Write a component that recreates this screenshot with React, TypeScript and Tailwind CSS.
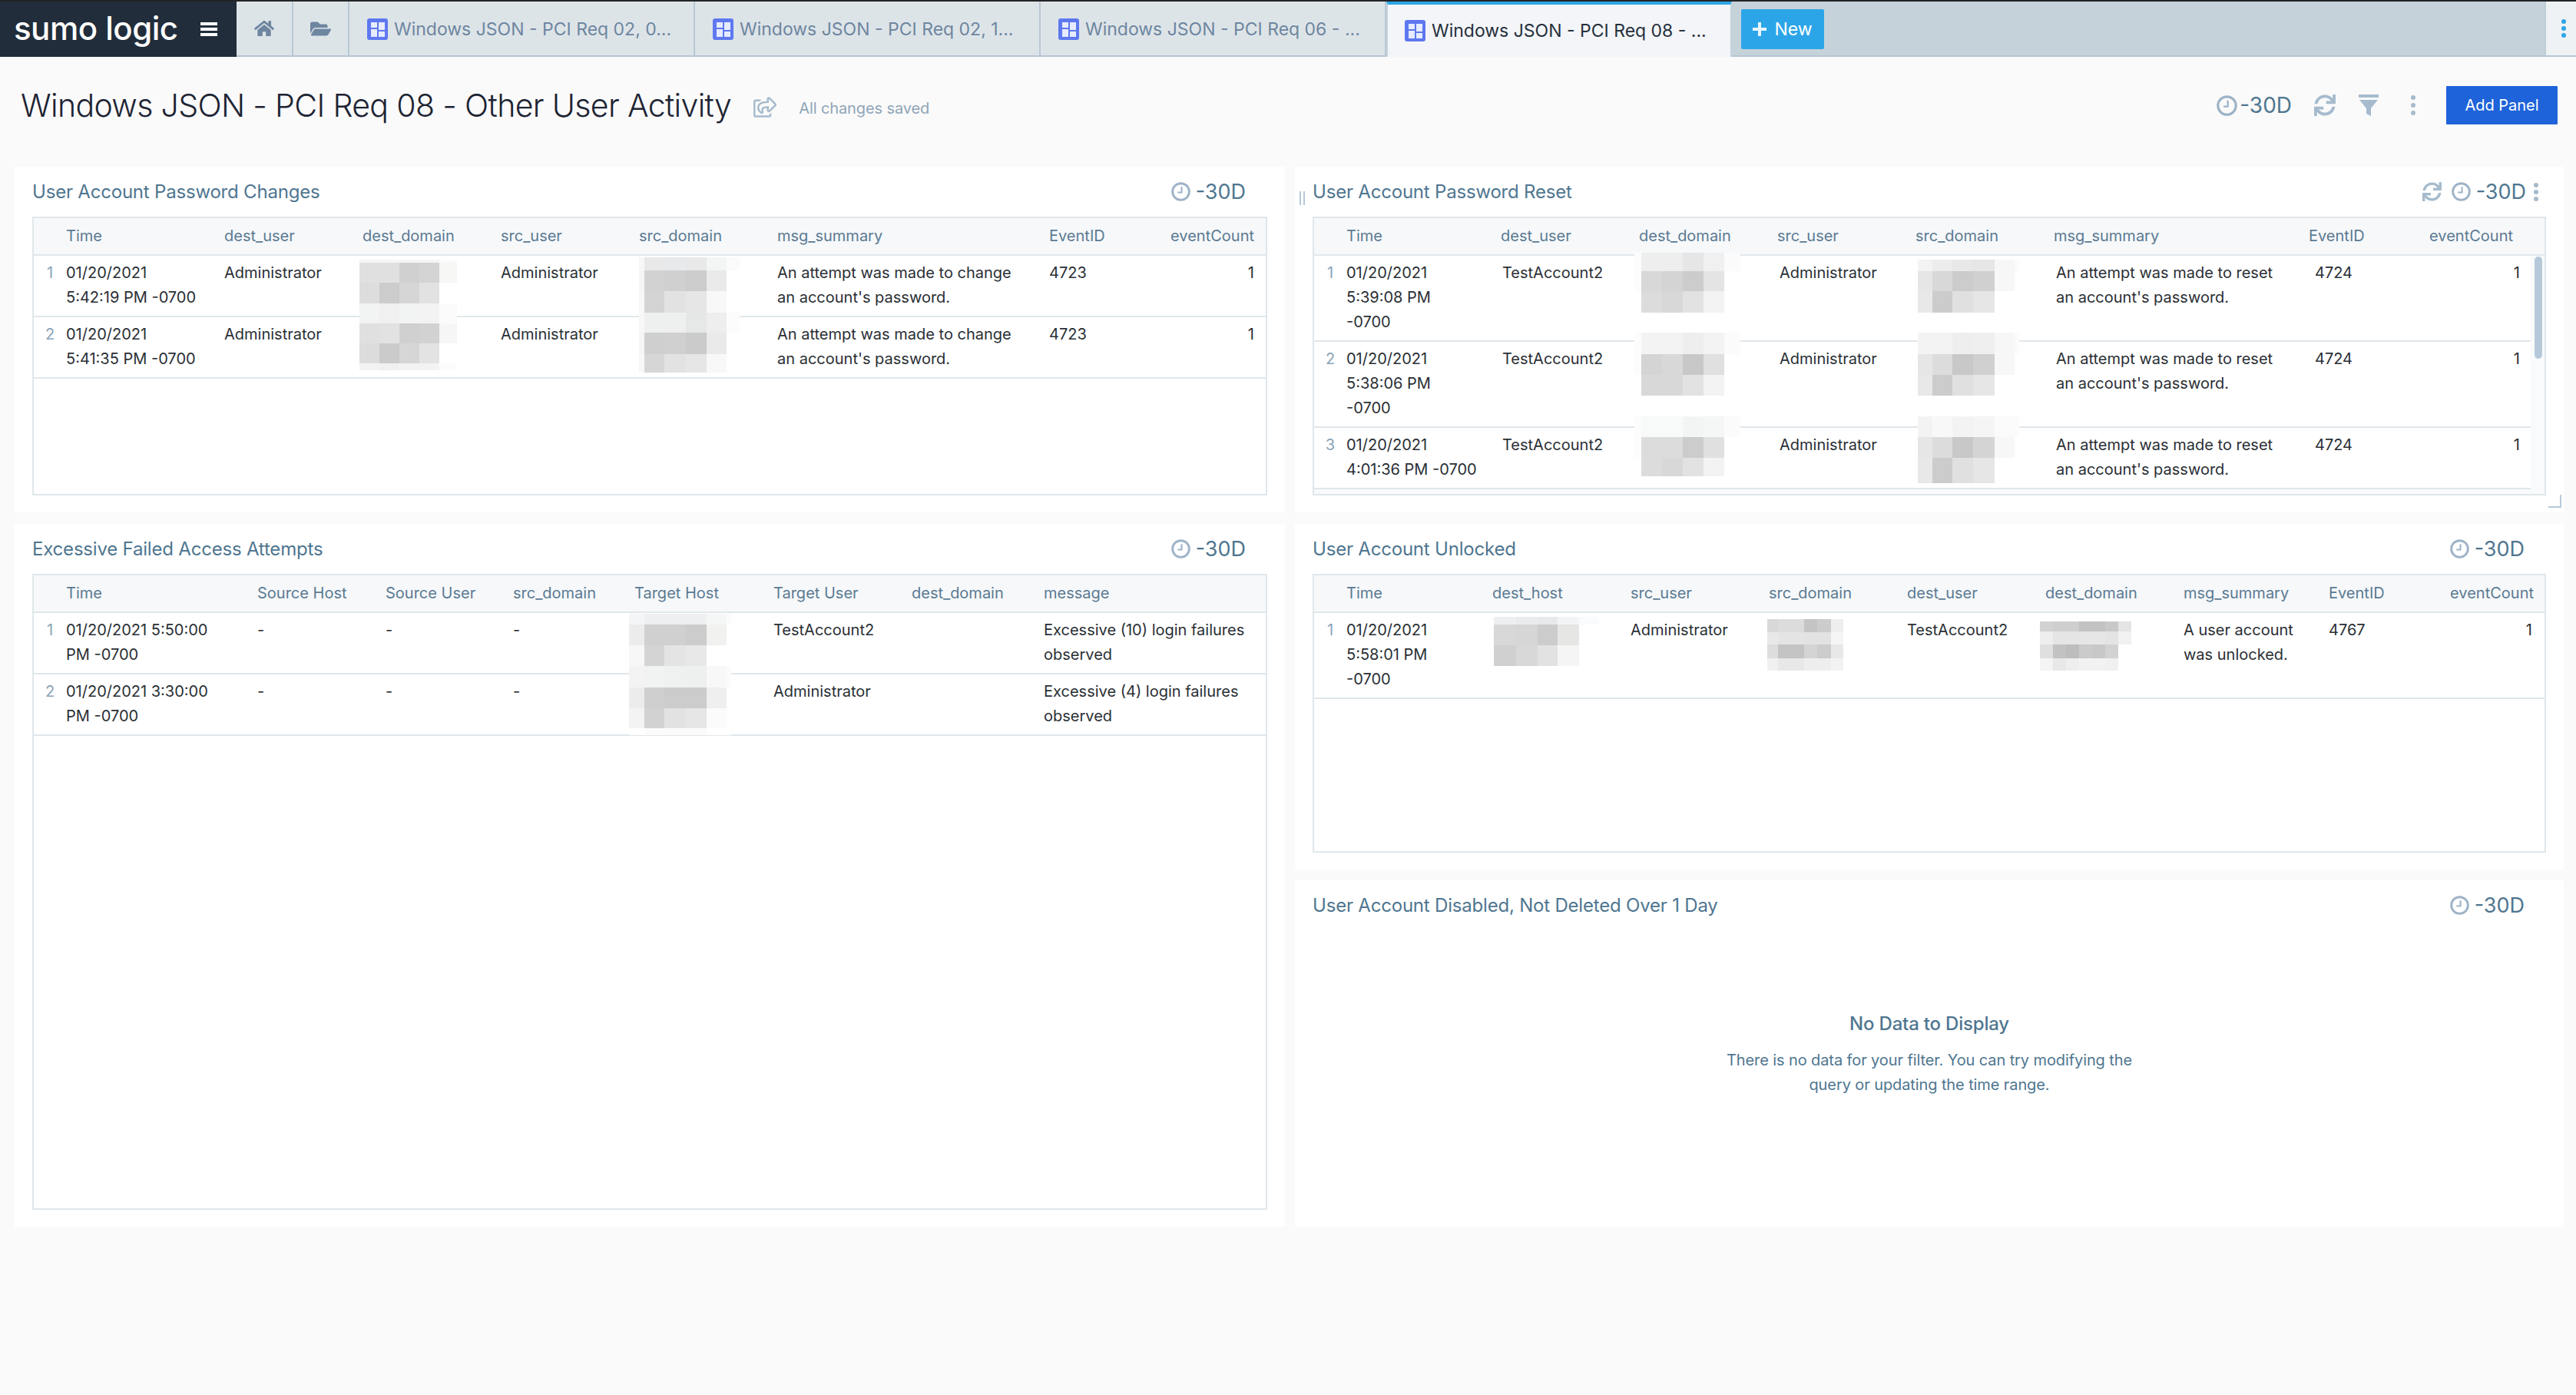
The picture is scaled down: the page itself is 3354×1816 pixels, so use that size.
import React from "react";
import { FaHome, FaFolderOpen, FaRegShareSquare, FaSync } from "react-icons/fa";

const font = "font-['Inter','Liberation_Sans',sans-serif]";

type Patch = { x: number[]; y: number[]; c: string[][] };

function Blur({ p, ox, oy }: { p: Patch; ox: number; oy: number }) {
  const cols = p.x.slice(1).map((v, i) => `${v - p.x[i]}px`).join(" ");
  const rows = p.y.slice(1).map((v, i) => `${v - p.y[i]}px`).join(" ");
  return (
    <div
      className="absolute grid"
      style={{ left: p.x[0] - ox, top: p.y[0] - oy, gridTemplateColumns: cols, gridTemplateRows: rows }}
    >
      {p.c.flat().map((color, i) => (
        <div key={i} style={{ background: color }} />
      ))}
    </div>
  );
}

function Clock({ className }: { className: string }) {
  return (
    <svg viewBox="0 0 24 24" className={className} fill="none" stroke="#9db3c7" strokeWidth="2.8">
      <circle cx="12" cy="12" r="10.4" />
      <path d="M13 6v7H8" strokeWidth="2" stroke="#9db3c7" />
    </svg>
  );
}

function DashIcon() {
  return (
    <svg viewBox="0 0 27 28" className="w-[27px] h-[28px] shrink-0 mr-[8px]">
      <rect width="27" height="28" rx="3" fill="#5e78f0" />
      <rect x="5" y="5" width="8" height="7" fill="#e6ebff" />
      <rect x="5" y="14" width="8" height="10" fill="#e6ebff" />
      <rect x="15" y="5" width="8" height="10" fill="#e6ebff" />
      <rect x="15" y="17" width="8" height="7" fill="#e6ebff" />
    </svg>
  );
}

function Dots({ className, dot }: { className: string; dot: string }) {
  return (
    <span className={`flex flex-col items-center justify-between ${className}`}>
      <span className={dot} />
      <span className={dot} />
      <span className={dot} />
    </span>
  );
}

function Tab({ label, active }: { label: string; active?: boolean }) {
  if (active) {
    return (
      <div className="w-[450px] bg-[#f3f5f8] border-t-[4px] border-[#2ca5e8] border-x-2 border-x-[#c5d2da] flex items-center pl-[22px] text-[#26303c] text-[23px] h-[72px] -mb-[2px]">
        <DashIcon />
        <span className="whitespace-nowrap">{label}</span>
      </div>
    );
  }
  return (
    <div className="w-[450px] h-full bg-[#dde4e8] border-r-2 border-[#b9c8d4] flex items-center pl-[23px] pt-[2px] text-[#6e86a0] text-[23px]">
      <DashIcon />
      <span className="whitespace-nowrap">{label}</span>
    </div>
  );
}

function TopBar() {
  return (
    <div className="h-[74px] flex bg-[#c5d2da] border-t-2 border-[#222426]">
      <div className="w-[308px] bg-[#212d3b] flex items-center pl-[18px] shrink-0">
        <span className="text-white text-[42px] font-medium tracking-[-0.5px] leading-none whitespace-nowrap w-[243px] -mt-[3px]">sumo logic</span>
        <span className="w-[22px] h-[18px] flex flex-col justify-between">
          <span className="h-[4px] bg-white" />
          <span className="h-[4px] bg-white" />
          <span className="h-[4px] bg-white" />
        </span>
      </div>
      <div className="flex-1 flex border-b-2 border-[#b6c5d3]">
        <div className="w-[74px] h-full bg-[#dde4e8] border-r-2 border-[#b9c8d4] flex items-center justify-center">
          <FaHome className="w-[26px] h-[26px] text-[#6e86a0]" />
        </div>
        <div className="w-[73px] h-full bg-[#dde4e8] border-r-2 border-[#b9c8d4] flex items-center justify-center">
          <FaFolderOpen className="w-[27px] h-[27px] text-[#6e86a0]" />
        </div>
        <Tab label="Windows JSON - PCI Req 02, 0..." />
        <Tab label="Windows JSON - PCI Req 02, 1..." />
        <Tab label="Windows JSON - PCI Req 06 - ..." />
        <Tab label="Windows JSON - PCI Req 08 - ..." active />
        <div className="ml-[12px] mt-[10px] w-[108px] h-[52px] bg-[#2ca5e8] rounded-[2px] flex items-center justify-center gap-[10px] text-white text-[23px]">
          <span className="relative w-[18px] h-[18px]">
            <span className="absolute left-0 right-0 top-[7px] h-[4px] bg-[#e8f5fd]" />
            <span className="absolute top-0 bottom-0 left-[7px] w-[4px] bg-[#e8f5fd]" />
          </span>
          New
        </div>
        <div className="flex-1" />
        <div className="w-[41px] h-full bg-[#eef2f4] border-l-2 border-[#c0ced8] flex items-center pl-[20px]">
          <Dots className="h-[24px]" dot="w-[6px] h-[6px] rounded-full bg-[#2ca5e8]" />
        </div>
      </div>
    </div>
  );
}

function PageHeader() {
  return (
    <div className="h-[143px] flex items-start pt-[38px] pl-[27px] pr-[24px]">
      <h1 className="text-[41px] font-light text-[#1d2433] leading-[50px] whitespace-nowrap tracking-[-0.64px]">
        Windows JSON - PCI Req 08 - Other User Activity
      </h1>
      <FaRegShareSquare className="w-[30px] h-[27px] text-[#a6bbcd] ml-[29px] mt-[14px]" />
      <span className="ml-[29px] mt-[14px] text-[20px] text-[#8fa5b8] whitespace-nowrap tracking-[-0.1px]">All changes saved</span>
      <div className="flex-1" />
      <div className="flex items-center h-[50px]">
        <Clock className="w-[27px] h-[27px]" />
        <span className="ml-[3px] text-[28px] text-[#4f7690] leading-none">-30D</span>
        <FaSync className="ml-[29px] w-[28px] h-[28px] text-[#a6bbcd]" />
        <svg viewBox="0 0 30 28" className="ml-[28px] w-[30px] h-[28px]" fill="#a6bbcd">
          <rect x="2" width="26" height="4" />
          <path d="M3 7h24l-9 11v10l-6-3v-7z" />
        </svg>
        <Dots className="ml-[40px] h-[26px]" dot="w-[6px] h-[6px] rounded-full bg-[#a6bbcd]" />
        <div className="ml-[40px] w-[145px] h-[50px] bg-[#1e63d9] rounded-[1px] flex items-center justify-center text-white text-[20px] whitespace-nowrap">
          Add Panel
        </div>
      </div>
    </div>
  );
}

type TableProps = {
  grid: string;
  headers: string[];
  rows: { h: string; cells: string[] }[];
  headerEnd: string;
  rowEnd: string;
  valueOffsets?: Record<number, string>;
  lastRight?: boolean;
  patches: Patch[];
  ox: number;
  oy: number;
  scroll?: boolean;
};

function DataTable({ grid, headers, rows, headerEnd, rowEnd, valueOffsets = {}, lastRight = true, patches, ox, oy, scroll }: TableProps) {
  return (
    <div className="relative flex-1 border-2 border-[#e0e7eb] flex flex-col overflow-hidden">
      <div className={`grid ${grid} ${headerEnd} h-[49px] shrink-0 bg-[#f6f8fa] border-b-2 border-[#e0e7eb] items-center pb-[2px] text-[20px] text-[#5b7a92] whitespace-nowrap`}>
        <div />
        {headers.map((h, i) => (
          <div key={h} className={lastRight && i === headers.length - 1 ? "text-right" : ""}>{h}</div>
        ))}
      </div>
      <div className={`flex-1 flex flex-col ${scroll ? "pr-[18px] bg-[#f8fafb]" : ""}`}>
        {rows.map((r, ri) => (
          <div key={ri} className={`grid ${grid} ${rowEnd} ${r.h} shrink-0 bg-white border-b-2 border-[#e0e7eb] pt-[6px] text-[20px] leading-[32px] text-[#2a2f35] whitespace-pre`}>
            <div className="text-center text-[#8aa3b8]">{ri + 1}</div>
            {r.cells.map((c, ci) => (
              <div key={ci} className={`${valueOffsets[ci] ?? ""} ${lastRight && ci === r.cells.length - 1 ? "text-right" : ""}`}>{c}</div>
            ))}
          </div>
        ))}
      </div>
      {patches.map((p, i) => (
        <Blur key={i} p={p} ox={ox} oy={oy} />
      ))}
      {scroll && <div className="absolute left-[1589px] top-[50px] w-[10px] h-[133px] rounded-full bg-[#b6c9da]" />}
    </div>
  );
}

function Panel({ title, h, extra, handle, corner, children }: { title: string; h: string; extra?: boolean; handle?: boolean; corner?: boolean; children: React.ReactNode }) {
  return (
    <section className={`relative ${h} bg-white px-[23px] pb-[22px] flex flex-col`}>
      <div className="h-[65px] shrink-0 flex items-center">
        {handle && (
          <span className="absolute left-[6px] top-[32px] w-[7px] h-[18px] border-x-2 border-[#b6c9da]" />
        )}
        <h2 className="text-[24px] text-[#4f7690] leading-none whitespace-nowrap tracking-[-0.2px]">{title}</h2>
        <div className="flex-1" />
        {extra && <FaSync className="w-[25px] h-[25px] text-[#a6bbcd] mr-[13px]" />}
        <Clock className="w-[25px] h-[25px]" />
        <span className={`ml-[7px] text-[27px] text-[#4f7690] leading-none ${extra ? "mr-[10px]" : "mr-[28px]"}`}>-30D</span>
        {extra && <Dots className="h-[24px] mr-[10px]" dot="w-[6px] h-[6px] rounded-full bg-[#a6bbcd]" />}
      </div>
      {children}
      {corner && <span className="absolute left-[1631px] top-[426px] w-[18px] h-[18px] border-r-2 border-b-2 border-[#b6c9da] [clip-path:polygon(100%_0,100%_100%,0_100%)]" />}
    </section>
  );
}

const w = "#ffffff";

const p1a: Patch = {
  x: [468, 494, 520, 546, 572, 595],
  y: [338, 342, 368, 395, 421, 447, 473, 482],
  c: [
    ["#f5f5f5", "#f5f5f5", "#f5f5f5", "#f5f5f5", "#fbfbfb"],
    ["#e0e0e0", "#e0e0e0", "#d0d0d0", "#d4d4d4", "#f7f7f5"],
    ["#dddddd", "#cccccc", "#d6d6d6", "#e2e2e2", w],
    ["#f2f3f3", "#f0f0f0", "#f2f3f3", "#f3f3f3", "#fbfbfb"],
    ["#e0e0e0", "#e2e2e2", "#d0d0d0", "#d2d2d2", "#f6f6f6"],
    ["#dcdcdc", "#cbcbcb", "#d6d6d6", "#e3e3e3", w],
    ["#f2f3f3", "#f0f0f0", "#f2f3f3", "#f3f3f3", "#fcfcfc"],
  ],
};
const p1b: Patch = {
  x: [832, 839, 865, 893, 920, 946, 963],
  y: [335, 352, 379, 407, 433, 461, 485],
  c: [
    ["#f7f7f7", "#e8e8e8", "#e8e9ea", "#e8e8e8", "#f3f4f4", "#fbfbfb"],
    ["#f5f5f5", "#d2d2d2", "#d0d0d0", "#cccccc", "#eaeaea", w],
    ["#f8f8f8", "#d4d4d4", "#e2e2e2", "#e6e6e6", "#f8f8f8", w],
    ["#f7f7f7", "#eeefef", "#eeefef", "#e6e7e7", "#eeeeee", "#fcfcfc"],
    ["#f5f5f5", "#cfcfcf", "#d0d0d0", "#cbcbcb", "#eaeaea", w],
    ["#f8f8f8", "#d6d6d6", "#e2e2e2", "#e6e6e6", "#f8f8f8", w],
  ],
};
const p2a = (ys: number[], a: string[], b: string[], c: string[]): Patch => ({
  x: [2128, 2137, 2164, 2191, 2218, 2245, 2266],
  y: ys,
  c: [
    ["#fcfcfc", ...a, "#fbfbfb"],
    ["#fcfcfc", ...b, w],
    [w, ...c, w],
  ],
});
const p2b = (ys: number[], a: string[], b: string[], c: string[]): Patch => ({
  x: [2497, 2516, 2542, 2569, 2597, 2623, 2629],
  y: ys,
  c: [
    ["#f3f3f3", ...a, "#fbfbfb"],
    ["#e6e6e6", ...b, w],
    ["#e8e8e8", ...c, w],
  ],
});
const p3: Patch = {
  x: [819, 839, 865, 893, 920, 946, 952],
  y: [799, 813, 840, 867, 895, 922, 948, 957],
  c: [
    ["#f4f5f6", "#eeeff0", "#eeeff0", "#eeeff0", "#f5f6f6", "#fbfbfb"],
    ["#ececec", "#d0d0d0", "#d0d0d0", "#cccccc", "#f1f1ef", w],
    ["#f7f7f7", "#d4d4d4", "#e4e4e4", "#e8e8e8", w, w],
    ["#f3f3f3", "#f1f2f2", "#eff0f0", "#eeefef", "#f8f8f8", "#fbfbfb"],
    ["#ececec", "#cfcfcf", "#cccccc", "#cccccc", "#efefef", w],
    ["#f3f3f3", "#d2d2d2", "#e2e2e2", "#e6e6e6", "#fbfbfb", w],
    [w, "#fbfbfb", "#fbfbfb", "#fbfbfb", w, w],
  ],
};
const p4a: Patch = {
  x: [1945, 1974, 2002, 2028, 2056, 2081],
  y: [803, 813, 840, 867],
  c: [
    ["#eeeff0", "#eaebec", "#e8e9ea", "#f3f4f5", "#fafbfc"],
    ["#d8d8d8", "#d6d6d6", "#cccccc", "#e6e6e4", w],
    ["#d0d0d0", "#d8d8d8", "#e2e2e2", "#f5f5f5", w],
  ],
};
const p4b: Patch = {
  x: [2301, 2315, 2349, 2366, 2384, 2400, 2417],
  y: [806, 823, 839, 857, 873],
  c: [
    ["#d8d8d8", "#dcdcdc", "#c4c4c4", "#cccccc", "#eeeeee", w],
    ["#e8e8e8", "#e4e4e4", "#e2e2e2", "#e2e2e2", "#f5f5f5", w],
    ["#dddddd", "#c4c4c4", "#d4d4d4", "#cccccc", "#e8e8e8", w],
    ["#f0f0f0", "#e8e8e8", "#eeeeee", "#eeeeee", "#f3f3f3", w],
  ],
};
const p4c: Patch = {
  x: [2656, 2673, 2690, 2707, 2724, 2741, 2758, 2775],
  y: [809, 822, 839, 857, 873],
  c: [
    ["#d2d2d2", "#cfcfcf", "#cfcfcf", "#c2c2c2", "#c2c2c2", "#c8c8c8", "#e4e4e4"],
    ["#eeeeee", "#e5e5e5", "#e5e5e5", "#e6e6e6", "#e6e6e6", "#e4e4e4", "#f1f1f1"],
    ["#dfdfdf", "#c2c2c2", "#bdbdbd", "#cbcbcb", "#c8c8c8", "#d2d2d2", w],
    ["#f4f4f4", "#e8e8e8", "#eeeeee", "#f2f2f2", "#f2f2f2", "#f0f0f0", w],
  ],
};

export default function App() {
  const pw1 = "An attempt was made to change\nan account's password.";
  const pw2 = "An attempt was made to reset\nan account's password.";
  return (
    <div className={`w-[3354px] h-[1816px] bg-[#fafafa] overflow-hidden ${font}`}>
      <TopBar />
      <PageHeader />
      <div className="flex gap-[13px] pl-[19px] pr-[16px]">
        <div className="w-[1654px] flex flex-col gap-[15px]">
          <Panel title="User Account Password Changes" h="h-[450px]">
            <DataTable
              grid="grid-cols-[42px_206px_180px_180px_180px_180px_354px_120px_1fr]"
              headerEnd="pr-[15px]"
              rowEnd="pr-[15px]"
              headers={["Time", "dest_user", "dest_domain", "src_user", "src_domain", "msg_summary", "EventID", "eventCount"]}
              rows={[
                { h: "h-[80px]", cells: ["01/20/2021\n5:42:19 PM -0700", "Administrator", "", "Administrator", "", pw1, "4723", "1"] },
                { h: "h-[80px]", cells: ["01/20/2021\n5:41:35 PM -0700", "Administrator", "", "Administrator", "", pw1, "4723", "1"] },
              ]}
              patches={[p1a, p1b]}
              ox={44}
              oy={284}
            />
          </Panel>
          <Panel title="Excessive Failed Access Attempts" h="h-[915px]">
            <DataTable
              grid="grid-cols-[42px_249px_167px_166px_158px_181px_180px_172px_1fr]"
              headerEnd="pr-[13px]"
              rowEnd="pr-[13px]"
              lastRight={false}
              headers={["Time", "Source Host", "Source User", "src_domain", "Target Host", "Target User", "dest_domain", "message"]}
              rows={[
                { h: "h-[80px]", cells: ["01/20/2021 5:50:00\nPM -0700", "-", "-", "-", "", "TestAccount2", "", "Excessive (10) login failures\nobserved"] },
                { h: "h-[80px]", cells: ["01/20/2021 3:30:00\nPM -0700", "-", "-", "-", "", "Administrator", "", "Excessive (4) login failures\nobserved"] },
              ]}
              patches={[p3]}
              ox={44}
              oy={749}
            />
          </Panel>
        </div>
        <div className="w-[1652px] flex flex-col gap-[15px]">
          <Panel title="User Account Password Reset" h="h-[450px]" extra handle corner>
            <DataTable
              grid="grid-cols-[42px_201px_180px_180px_180px_180px_332px_120px_1fr]"
              headerEnd="pr-[41px]"
              rowEnd="pr-[14px]"
              valueOffsets={{ 1: "pl-[2px]", 3: "pl-[3px]", 5: "pl-[3px]", 6: "pl-[8px]" }}
              headers={["Time", "dest_user", "dest_domain", "src_user", "src_domain", "msg_summary", "EventID", "eventCount"]}
              rows={[
                { h: "h-[112px]", cells: ["01/20/2021\n5:39:08 PM\n-0700", "TestAccount2", "", "Administrator", "", pw2, "4724", "1"] },
                { h: "h-[112px]", cells: ["01/20/2021\n5:38:06 PM\n-0700", "TestAccount2", "", "Administrator", "", pw2, "4724", "1"] },
                { h: "h-[80px]", cells: ["01/20/2021\n4:01:36 PM -0700", "TestAccount2", "", "Administrator", "", pw2, "4724", "1"] },
              ]}
              patches={[
                p2a([329, 353, 379, 407], ["#eeeeee", "#eeeeee", "#e6e6e6", "#f0f0f0"], ["#d8d8d8", "#d4d4d4", "#cccccc", "#e4e4e4"], ["#dcdcdc", "#d8d8d8", "#e2e2e2", "#f3f3f3"]),
                p2a([433, 461, 488, 515], ["#f3f3f3", "#f3f3f3", "#eeeeee", "#f3f3f3"], ["#d4d4d4", "#d8d8d8", "#c8c8c8", "#e0e0e0"], ["#d8d8d8", "#d8d8d8", "#e2e2e2", "#f3f3f3"]),
                p2a([542, 569, 596, 620], ["#f8f9f9", "#f8f9f9", "#f3f4f4", "#f5f6f6"], ["#dcdcdc", "#dcdcdc", "#cccccc", "#e0e0e0"], ["#dcdcdc", "#d8d8d8", "#e2e2e2", "#f3f3f3"]),
                p2b([338, 353, 379, 407], ["#ececec", "#e8e8e8", "#e6e6e6", "#f7f7f7"], ["#d8d8d8", "#cccccc", "#d0d0d0", "#f7f7f7"], ["#cccccc", "#e0e0e0", "#e6e6e6", w]),
                p2b([433, 461, 488, 515], ["#f3f3f3", "#eeeeee", "#efefef", "#f7f7f7"], ["#dcdcdc", "#c8c8c8", "#d0d0d0", "#f7f7f7"], ["#cccccc", "#e0e0e0", "#e6e6e6", w]),
                p2b([542, 569, 596, 629], ["#f8f8f8", "#f3f3f3", "#f5f5f5", "#fbfbfb"], ["#dcdcdc", "#c8c8c8", "#d4d4d4", "#f7f7f7"], ["#cccccc", "#e0e0e0", "#e6e6e6", w]),
              ]}
              ox={1711}
              oy={284}
              scroll
            />
          </Panel>
          <Panel title="User Account Unlocked" h="h-[450px]">
            <DataTable
              grid="grid-cols-[42px_190px_180px_180px_180px_180px_180px_189px_120px_1fr]"
              headerEnd="pr-[14px]"
              rowEnd="pr-[16px]"
              headers={["Time", "dest_host", "src_user", "src_domain", "dest_user", "dest_domain", "msg_summary", "EventID", "eventCount"]}
              rows={[
                { h: "h-[112px]", cells: ["01/20/2021\n5:58:01 PM\n-0700", "", "Administrator", "", "TestAccount2", "", "A user account\nwas unlocked.", "4767", "1"] },
              ]}
              patches={[p4a, p4b, p4c]}
              ox={1711}
              oy={749}
            />
          </Panel>
          <Panel title="User Account Disabled, Not Deleted Over 1 Day" h="h-[451px] -mt-px">
            <div className="flex-1 flex flex-col items-center pt-[106px] text-[#4f7690]">
              <div className="text-[24px] leading-[32px] font-medium tracking-[-0.2px]">No Data to Display</div>
              <div className="mt-[15px] text-[20px] leading-[32px] text-center whitespace-pre tracking-[-0.1px]">
                {"There is no data for your filter. You can try modifying the\nquery or updating the time range."}
              </div>
            </div>
          </Panel>
        </div>
      </div>
    </div>
  );
}
